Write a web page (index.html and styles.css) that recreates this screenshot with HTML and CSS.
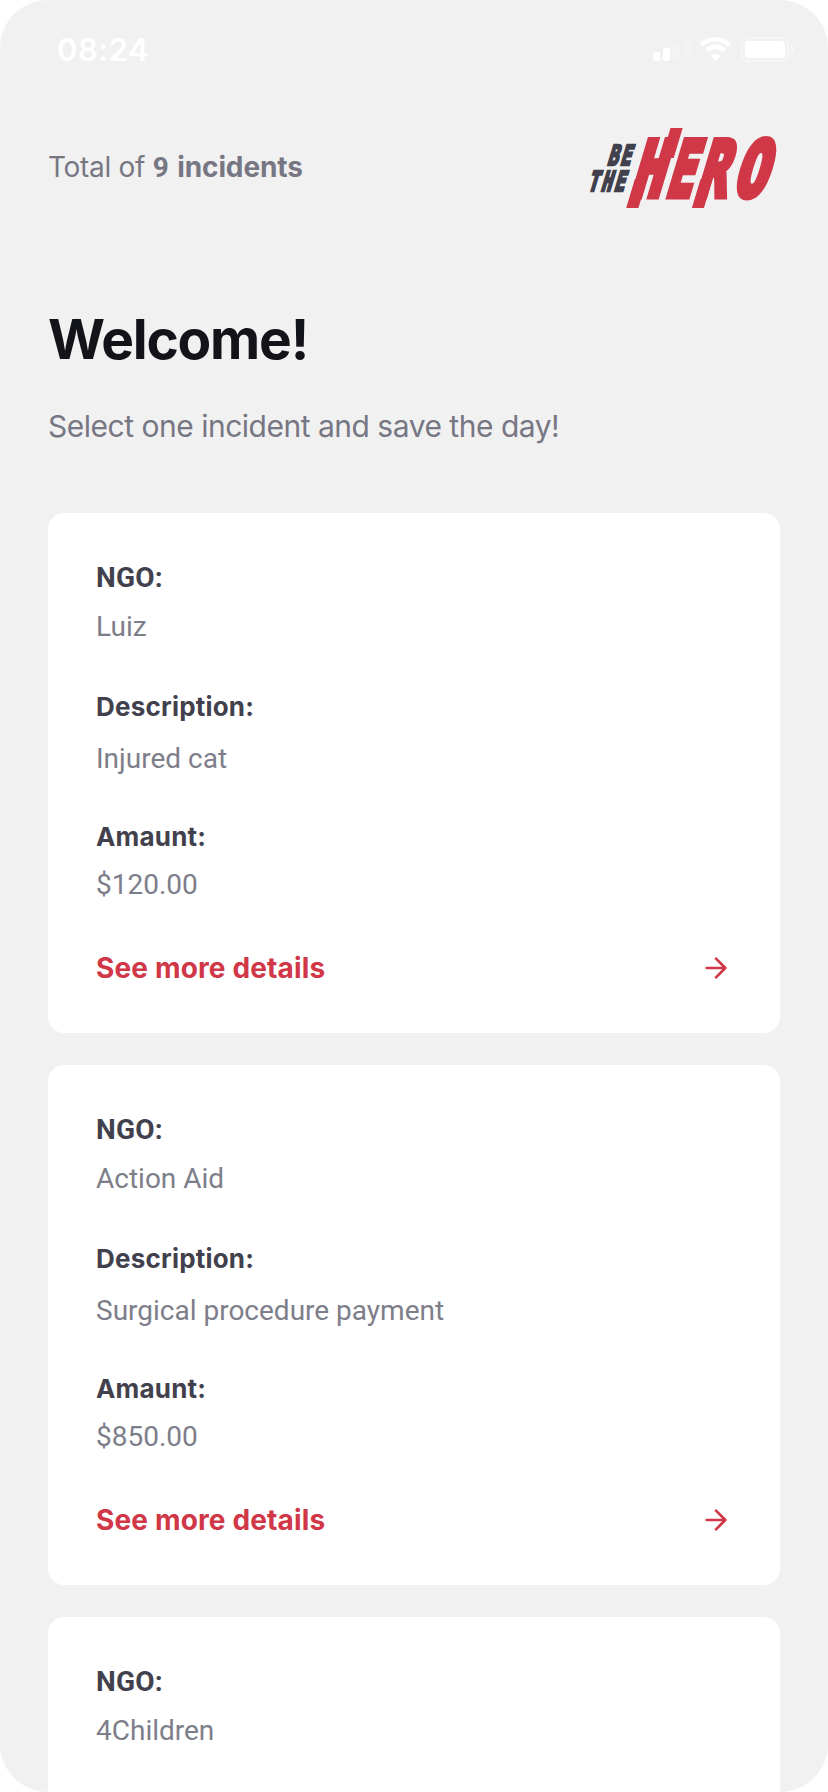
FILE: index.html
```html
<!DOCTYPE html>
<html lang="en">
<head>
<meta charset="utf-8">
<title>Be The Hero</title>
<link rel="stylesheet" href="styles.css">
</head>
<body>
<div class="screen">
  <div class="status-bar">
    <span class="time">08:24</span>
    <svg class="status-icons" width="144" height="28" viewBox="0 0 144 28" fill="#fff">
      <rect x="1" y="16" width="7" height="9" rx="1.7"/>
      <rect x="11" y="12" width="7" height="13" rx="1.7"/>
      <rect x="21" y="7" width="7" height="18" rx="1.7" opacity=".2"/>
      <rect x="31" y="2" width="7" height="23" rx="1.7" opacity=".2"/>
      <g fill="none" stroke="#fff" stroke-width="4.6">
        <path d="M49.5 9.2a19.5 19.5 0 0 1 28 0"/>
        <path d="M54.8 14.6a12 12 0 0 1 17.4 0"/>
      </g>
      <path d="M63.5 25l-5-5a7.2 7.2 0 0 1 10 0z"/>
      <rect x="90" y="2" width="46" height="23" rx="6.5" fill="none" stroke="#fff" stroke-width="2" opacity=".4"/>
      <rect x="93" y="5" width="40" height="17" rx="3.5"/>
      <path d="M139 9.500c3.500 1.200 3.500 6.800 0 8z" opacity=".45"/>
    </svg>
  </div>

  <header class="header">
    <p class="total">Total of <strong><span class="count">9</span> incidents</strong></p>
    <svg class="logo" width="192" height="80" viewBox="0 0 192 80">
      <g transform="translate(0 71) skewX(-16.7)" fill="#d03747">
        <g class="logo-hero" transform="translate(0 -3.300)">
          <text transform="translate(40.300 0) scale(.69 1)">H</text>
          <text transform="translate(75.800 0) scale(.58 1)">E</text>
          <text transform="translate(106.300 0) scale(.64 1)">R</text>
          <text transform="translate(143 0) scale(.71 1)">O</text>
        </g>
        <rect x="40.900" y="-20" width="12.200" height="29"/>
        <rect x="61.200" y="-71" width="12.200" height="30"/>
        <rect x="106.600" y="-20" width="12" height="29"/>
      </g>
      <g fill="#41414d">
        <text class="logo-small" transform="translate(0 37) skewX(-16.7) scale(.65 1)" x="28.900 48.400">BE</text>
        <text class="logo-small" transform="translate(0 63.300) skewX(-16.7) scale(.65 1)" x="-1.500 18.800 38.700">THE</text>
      </g>
    </svg>
  </header>

  <h1 class="title">Welcome!</h1>
  <p class="subtitle">Select one incident and save the day!</p>

  <main class="incidents">
    <article class="card">
      <h2 class="label label-ngo">NGO:</h2>
      <p class="value">Luiz</p>
      <h2 class="label label-description">Description:</h2>
      <p class="value">Injured cat</p>
      <h2 class="label label-amount">Amaunt:</h2>
      <p class="value">$120.00</p>
      <a class="details"><span>See more details</span>
        <svg class="arrow" width="32" height="32" viewBox="0 0 24 24"><path d="M5 12h14M12 5l7 7-7 7"/></svg></a>
    </article>
    <article class="card">
      <h2 class="label label-ngo">NGO:</h2>
      <p class="value">Action Aid</p>
      <h2 class="label label-description">Description:</h2>
      <p class="value">Surgical procedure payment</p>
      <h2 class="label label-amount">Amaunt:</h2>
      <p class="value">$850.00</p>
      <a class="details"><span>See more details</span>
        <svg class="arrow" width="32" height="32" viewBox="0 0 24 24"><path d="M5 12h14M12 5l7 7-7 7"/></svg></a>
    </article>
    <article class="card">
      <h2 class="label label-ngo">NGO:</h2>
      <p class="value">4Children</p>
    </article>
  </main>
</div>
</body>
</html>
```
FILE: styles.css
```css
* { box-sizing: border-box; margin: 0; padding: 0; }
body { background: #fff; font-family: Inter, "Liberation Sans", sans-serif; }
.screen {
  width: 828px; height: 1792px; overflow: hidden;
  background: #f1f1f1; border-radius: 48px;
  padding: 0 48px;
}
.status-bar {
  display: flex; justify-content: space-between; align-items: flex-start;
  height: 128px; padding: 34px 0 0 9px; margin-right: -16px;
  color: #fff;
}
.time { font-size: 31px; line-height: 32px; font-weight: 600; letter-spacing: .5px; }
.status-icons { margin-top: 2px; }
.header { display: flex; justify-content: space-between; align-items: flex-start; height: 80px; }
.total { margin-top: 23px; font-size: 28px; line-height: 32px; letter-spacing: -.3px; color: #777784; }
.total strong { font-weight: 700; letter-spacing: -.1px; }
.total .count { font-family: Roboto, sans-serif; margin-right: 2px; }
.logo { overflow: visible; }
.logo-hero { font: 700 76px "DejaVu Sans Mono", monospace; stroke: #d03747; stroke-width: 7px; stroke-linejoin: miter; }
.logo-small { font: 700 27.500px "DejaVu Sans Mono", monospace; stroke: #41414d; stroke-width: 2.500px; }
.title { margin-top: 99px; font-size: 55px; line-height: 64px; font-weight: 700; letter-spacing: -1.200px; color: #13131a; }
.subtitle { margin-top: 39px; font-size: 30px; line-height: 32px; letter-spacing: -.490px; color: #777784; }
.incidents { display: flex; flex-direction: column; gap: 32px; margin-top: 71px; }
.card { flex: none; height: 520px; padding: 49px 48px 47px; background: #fff; border-radius: 16px; }
.label { font-size: 26px; line-height: 32px; font-weight: 700; letter-spacing: .200px; color: #41414d; }
.label-ngo { font-family: Roboto, sans-serif; font-size: 28px; margin-bottom: 17px; }
.label-description { margin: 48px 0 20px; }
.label-amount { margin: 46px 0 16px; }
.value { font-family: Roboto, sans-serif; font-size: 28px; line-height: 32px; color: #7e7e8a; }
.details {
  display: flex; justify-content: space-between; align-items: center;
  margin-top: 51px; font-size: 28px; line-height: 32px; font-weight: 700; letter-spacing: .150px; color: #d03747;
}
.arrow { fill: none; stroke: currentColor; stroke-width: 2; stroke-linecap: round; stroke-linejoin: round; }
```
